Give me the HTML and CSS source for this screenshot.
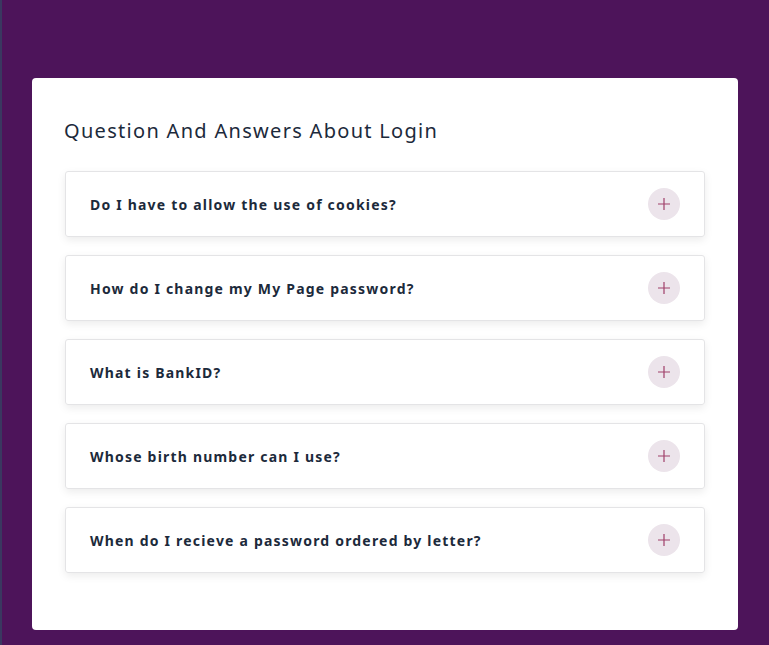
FILE: index.html
```html
<!DOCTYPE html>
<html>
<head>
<meta charset="utf-8">
<link rel="stylesheet" href="styles.css">
</head>
<body>
<main class="card">
  <h1 class="title">Question And Answers About Login</h1>
  <div class="faq">
    <div class="item"><span class="q">Do I have to allow the use of cookies?</span><span class="toggle"><svg width="14" height="14" viewBox="0 0 14 14"><path d="M7 1v12M1 7h12" stroke="#a0406a" stroke-width="1.2" fill="none"/></svg></span></div>
    <div class="item"><span class="q">How do I change my My Page password?</span><span class="toggle"><svg width="14" height="14" viewBox="0 0 14 14"><path d="M7 1v12M1 7h12" stroke="#a0406a" stroke-width="1.2" fill="none"/></svg></span></div>
    <div class="item"><span class="q">What is BankID?</span><span class="toggle"><svg width="14" height="14" viewBox="0 0 14 14"><path d="M7 1v12M1 7h12" stroke="#a0406a" stroke-width="1.2" fill="none"/></svg></span></div>
    <div class="item"><span class="q">Whose birth number can I use?</span><span class="toggle"><svg width="14" height="14" viewBox="0 0 14 14"><path d="M7 1v12M1 7h12" stroke="#a0406a" stroke-width="1.2" fill="none"/></svg></span></div>
    <div class="item"><span class="q">When do I recieve a password ordered by letter?</span><span class="toggle"><svg width="14" height="14" viewBox="0 0 14 14"><path d="M7 1v12M1 7h12" stroke="#a0406a" stroke-width="1.2" fill="none"/></svg></span></div>
  </div>
</main>
</body>
</html>
```
FILE: styles.css
```css
html { background: #4d145a; }
body {
  margin: 0;
  min-height: 645px;
  border-left: 2px solid #3a3860;
  padding: 78px 0 0 30px;
  box-sizing: border-box;
  font-family: "Noto Sans", "Open Sans", sans-serif;
  color: #1c2a3b;
}
.card {
  width: 706px;
  height: 552px;
  box-sizing: border-box;
  background: #fff;
  border-radius: 4px;
  padding: 39px 33px 0 33px;
}
.title {
  margin: 0 0 26px -1px;
  font-size: 20px;
  font-weight: 400;
  letter-spacing: 1.3px;
  line-height: 28px;
}
.faq {
  display: flex;
  flex-direction: column;
  gap: 18px;
}
.item {
  height: 66px;
  box-sizing: border-box;
  border: 1px solid #e4e4e6;
  border-radius: 3px;
  box-shadow: 0 3px 8px rgba(0,0,0,0.08);
  display: flex;
  align-items: center;
  justify-content: space-between;
  padding: 0 24px 0 24px;
}
.q {
  font-size: 14px;
  font-weight: 700;
  letter-spacing: 1.2px;
  color: #1c2a3b;
}
.toggle {
  width: 32px;
  height: 32px;
  border-radius: 50%;
  background: #ece4eb;
  display: flex;
  align-items: center;
  justify-content: center;
}
```
